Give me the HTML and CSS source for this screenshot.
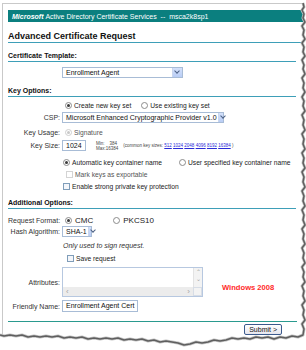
FILE: index.html
```html
<!DOCTYPE html>
<html lang="en">

<head>
  <meta charset="UTF-8" />
  <title>Advanced Certificate Request</title>
  <link rel="stylesheet" href="styles.css">
</head>

<body>
  <div class="shot">
    <div class="page">
      <div class="banner"><b>Microsoft</b>&nbsp;Active Directory Certificate Services &nbsp;--&nbsp; msca2k8sp1</div>

      <div class="title">Advanced Certificate Request</div>

      <div class="sec">Certificate Template:</div>
      <div class="row r-sel">
        <span class="lbl"></span>
        <div class="select w-tpl"><span class="val">Enrollment Agent</span><span class="arrow"></span></div>
      </div>

      <div class="sec">Key Options:</div>
      <div class="row r-10 mt3">
        <span class="lbl"></span>
        <span class="opt ml3"><span class="radio on"></span>Create new key set</span>
        <span class="opt ml10"><span class="radio"></span>Use existing key set</span>
      </div>
      <div class="row r-sel mt2">
        <span class="lbl">CSP:</span>
        <div class="select w-csp"><span class="val">Microsoft Enhanced Cryptographic Provider v1.0</span><span class="arrow"></span></div>
      </div>
      <div class="row r-10 mt4">
        <span class="lbl">Key Usage:</span>
        <span class="opt ml3 muted"><span class="radio on off"></span>Signature</span>
      </div>
      <div class="row r-13 mt2">
        <span class="lbl">Key Size:</span>
        <div class="input w-size">1024</div>
        <div class="minmax">
          <span>Min:&nbsp;&nbsp;&nbsp;&nbsp;384</span>
          <span>Max:16384</span>
        </div>
        <div class="common">(common key sizes: <a href="#">512</a> <a href="#">1024</a> <a href="#">2048</a> <a href="#">4096</a> <a href="#">8192</a> <a href="#">16384</a> )</div>
      </div>
      <div class="row r-10 mt5">
        <span class="lbl"></span>
        <span class="opt ml1"><span class="radio on"></span>Automatic key container name</span>
        <span class="opt ml17"><span class="radio"></span>User specified key container name</span>
      </div>
      <div class="row r-10 mt2">
        <span class="lbl"></span>
        <span class="opt ml4 muted"><span class="check off"></span>Mark keys as exportable</span>
      </div>
      <div class="row r-10 mt2">
        <span class="lbl"></span>
        <span class="opt ml1"><span class="check"></span>Enable strong private key protection</span>
      </div>

      <div class="sec sec-add">Additional Options:</div>
      <div class="row r-12 mt5">
        <span class="lbl">Request Format:</span>
        <span class="opt big ml3"><span class="radio on"></span>CMC</span>
        <span class="opt big ml20"><span class="radio"></span>PKCS10</span>
      </div>
      <div class="row r-sel">
        <span class="lbl">Hash Algorithm:</span>
        <div class="select w-hash"><span class="val">SHA-1</span><span class="arrow"></span></div>
      </div>
      <div class="row r-10 mt3">
        <span class="lbl"></span>
        <span class="note">Only used to sign request.</span>
      </div>
      <div class="row r-10 mt3">
        <span class="lbl"></span>
        <span class="opt ml5"><span class="check"></span>Save request</span>
      </div>
      <div class="row r-attr mt4">
        <span class="lbl">Attributes:</span>
        <div class="textarea">
          <div class="ta-body"></div>
          <div class="ta-vbar"><span>&#8963;</span><span>&#8964;</span></div>
          <div class="ta-hbar"><span>&lsaquo;</span><span>&rsaquo;</span></div>
          <div class="ta-corner"></div>
        </div>
        <span class="stamp">Windows 2008</span>
      </div>
      <div class="row r-12 mt3">
        <span class="lbl">Friendly Name:</span>
        <div class="input w-name">Enrollment Agent Cert</div>
      </div>

      <div class="divider"></div>
      <div class="row r-btn mt2">
        <button class="submit" type="button">Submit &gt;</button>
      </div>
    </div>

    <svg class="torn" width="306" height="350" viewBox="0 0 306 350">
      <path class="cover" d="M306,0 L303,3 304,7 302,10 304,14 303,18 305,22 302,26 304,30 303,35 305,39 302,43 304,47 303,52 305,56 302,60 304,65 303,69 305,74 302,78 304,83 303,88 305,92 302,97 304,101 303,106 305,111 302,115 304,120 303,125 305,130 302,134 304,139 303,144 305,149 302,153 304,158 303,163 305,168 302,172 304,177 303,182 305,187 302,191 304,196 303,201 305,206 302,210 304,215 303,220 305,225 302,229 304,234 303,239 305,244 302,248 304,253 303,258 305,263 302,267 304,272 303,277 305,282 302,286 304,291 303,296 305,301 302,305 304,310 303,315 305,320 302,324 304,329 303,335 298,337 292,336 286,338 280,337 274,339 268,337 262,338 256,337 250,339 244,338 238,339 232,338 226,340 220,341 214,340 208,342 202,343 196,342 190,344 184,345 178,343 172,342 166,341 160,342 154,340 148,341 142,339 136,340 130,339 124,340 118,338 112,339 106,338 100,339 94,338 88,339 82,337 76,338 70,337 64,338 58,336 52,337 46,336 40,337 34,336 28,337 22,335 16,336 10,335 4,336 0,335 L0,350 L306,350 Z" />
      <polyline class="shade" points="303,3 304,7 302,10 304,14 303,18 305,22 302,26 304,30 303,35 305,39 302,43 304,47 303,52 305,56 302,60 304,65 303,69 305,74 302,78 304,83 303,88 305,92 302,97 304,101 303,106 305,111 302,115 304,120 303,125 305,130 302,134 304,139 303,144 305,149 302,153 304,158 303,163 305,168 302,172 304,177 303,182 305,187 302,191 304,196 303,201 305,206 302,210 304,215 303,220 305,225 302,229 304,234 303,239 305,244 302,248 304,253 303,258 305,263 302,267 304,272 303,277 305,282 302,286 304,291 303,296 305,301 302,305 304,310 303,315 305,320 302,324 304,329 303,335 298,337 292,336 286,338 280,337 274,339 268,337 262,338 256,337 250,339 244,338 238,339 232,338 226,340 220,341 214,340 208,342 202,343 196,342 190,344 184,345 178,343 172,342 166,341 160,342 154,340 148,341 142,339 136,340 130,339 124,340 118,338 112,339 106,338 100,339 94,338 88,339 82,337 76,338 70,337 64,338 58,336 52,337 46,336 40,337 34,336 28,337 22,335 16,336 10,335 4,336 0,335" />
      <polyline class="edge" points="303,3 304,7 302,10 304,14 303,18 305,22 302,26 304,30 303,35 305,39 302,43 304,47 303,52 305,56 302,60 304,65 303,69 305,74 302,78 304,83 303,88 305,92 302,97 304,101 303,106 305,111 302,115 304,120 303,125 305,130 302,134 304,139 303,144 305,149 302,153 304,158 303,163 305,168 302,172 304,177 303,182 305,187 302,191 304,196 303,201 305,206 302,210 304,215 303,220 305,225 302,229 304,234 303,239 305,244 302,248 304,253 303,258 305,263 302,267 304,272 303,277 305,282 302,286 304,291 303,296 305,301 302,305 304,310 303,315 305,320 302,324 304,329 303,335 298,337 292,336 286,338 280,337 274,339 268,337 262,338 256,337 250,339 244,338 238,339 232,338 226,340 220,341 214,340 208,342 202,343 196,342 190,344 184,345 178,343 172,342 166,341 160,342 154,340 148,341 142,339 136,340 130,339 124,340 118,338 112,339 106,338 100,339 94,338 88,339 82,337 76,338 70,337 64,338 58,336 52,337 46,336 40,337 34,336 28,337 22,335 16,336 10,335 4,336 0,335" />
    </svg>
  </div>
</body>

</html>
```

FILE: styles.css
```css
body {
  margin: 0;
  background: #fff;
  font-family: "Liberation Sans", Arial, sans-serif;
  font-size: 7px;
  color: #222;
}

.shot {
  position: relative;
  width: 306px;
  height: 350px;
  overflow: hidden;
}

.page {
  margin: 3px 0 0 2px;
  width: 302px;
  height: 333px;
  padding-left: 5px;
  box-sizing: border-box;
  border-top: 1px solid #c9c9c9;
  border-left: 1px solid #c9c9c9;
}

.banner {
  margin-top: 6px;
  height: 12px;
  padding-left: 4px;
  display: flex;
  align-items: center;
  background: #0b7f7f;
  color: #fff;
  white-space: nowrap;
}

.banner b {
  font-style: italic;
}

.title {
  margin: 8px 1px 0 0;
  height: 12px;
  line-height: 12px;
  font-size: 9px;
  font-weight: bold;
  color: #111;
  border-bottom: 1px solid #3e9fb8;
}

.sec {
  margin: 8px 8px 0 0;
  height: 10px;
  line-height: 10px;
  font-weight: bold;
  color: #111;
  border-bottom: 1px solid #3e9fb8;
}

.sec-add {
  margin-top: 7px;
}

.row {
  display: flex;
  align-items: center;
  white-space: nowrap;
}

.r-sel { height: 11px; margin-top: 5px; }
.r-10 { height: 10px; }
.r-12 { height: 12px; }
.r-13 { height: 13px; }
.r-attr { height: 30px; align-items: stretch; }
.r-btn { height: 11px; justify-content: flex-end; padding-right: 22px; }

.r-sel.mt2 { margin-top: 2px; }
.r-12 + .r-sel { margin-top: 0; }

.mt2 { margin-top: 2px; }
.mt3 { margin-top: 3px; }
.mt4 { margin-top: 4px; }
.mt5 { margin-top: 5px; }

.ml1 { margin-left: 1px; }
.ml3 { margin-left: 3px; }
.ml4 { margin-left: 4px; }
.ml5 { margin-left: 5px; }
.ml10 { margin-left: 10px; }
.ml17 { margin-left: 17px; }
.ml20 { margin-left: 20px; }

.lbl {
  width: 52px;
  margin-right: 2px;
  text-align: right;
  color: #333;
  flex-shrink: 0;
}

.r-attr .lbl {
  align-self: center;
}

.opt {
  display: flex;
  align-items: center;
  gap: 2px;
  font-size: 6.7px;
  color: #222;
}

.opt.big {
  font-size: 8px;
  gap: 3px;
}

.muted {
  color: #555;
}

.radio {
  position: relative;
  width: 5px;
  height: 5px;
  border: 1px solid #8c8c8c;
  border-radius: 50%;
  background: #fff;
}

.radio.on::after {
  content: "";
  position: absolute;
  left: 1px;
  top: 1px;
  width: 3px;
  height: 3px;
  border-radius: 50%;
  background: #3a3a3a;
}

.radio.off {
  border-color: #cfcfcf;
}

.radio.off::after {
  background: #c8c8c8;
}

.check {
  width: 5px;
  height: 5px;
  border: 1px solid #7f9db9;
  background: #f4f6fa;
}

.check.off {
  border-color: #d4d4d4;
  background: #fff;
}

.select {
  display: flex;
  height: 11px;
  box-sizing: border-box;
  border: 1px solid #a8bcd6;
  background: #fff;
}

.select .val {
  flex: 1;
  padding-left: 3px;
  line-height: 9px;
  color: #111;
}

.select .arrow {
  position: relative;
  width: 9px;
  margin: 0 0 0 1px;
  background: linear-gradient(#d4e1fb, #b9cdf5);
  border-left: 1px solid #c9d6ee;
}

.select .arrow::after {
  content: "";
  position: absolute;
  left: 2px;
  top: 1px;
  width: 3px;
  height: 3px;
  border-right: 1.5px solid #4d6185;
  border-bottom: 1.5px solid #4d6185;
  transform: rotate(45deg);
}

.w-tpl { width: 121px; }
.w-csp { width: 162px; }
.w-hash { width: 30px; }

.input {
  height: 11px;
  box-sizing: border-box;
  padding-left: 3px;
  line-height: 9px;
  border: 1px solid #a8bcd6;
  color: #111;
}

.r-12 .input { height: 12px; line-height: 10px; }

.w-size { width: 24px; }
.w-name { width: 76px; }

.minmax {
  display: flex;
  flex-direction: column;
  margin-left: 10px;
  font-size: 4.5px;
  line-height: 5px;
  color: #444;
}

.common {
  margin-left: 5px;
  font-size: 4.5px;
  color: #444;
}

.common a {
  color: #2a2ad8;
}

.note {
  font-style: italic;
  color: #333;
  margin-left: 1px;
}

.textarea {
  position: relative;
  width: 141px;
  box-sizing: border-box;
  border: 1px solid #b7c8e0;
  display: grid;
  grid-template-columns: 1fr 9px;
  grid-template-rows: 1fr 9px;
}

.ta-vbar {
  display: flex;
  flex-direction: column;
  align-items: center;
  padding-top: 1px;
  background: #f3f3f3;
  border-left: 1px solid #e3e3e3;
  color: #a5a5a5;
  font-size: 6px;
  line-height: 7px;
}

.ta-hbar {
  display: flex;
  justify-content: space-between;
  align-items: center;
  padding: 0 3px;
  background: #ececec;
  color: #a5a5a5;
  font-size: 8px;
  line-height: 8px;
}

.ta-corner {
  background: #f3f3f3;
  border: 1px solid #d7dde6;
}

.stamp {
  align-self: center;
  margin: 10px 0 0 19px;
  font-size: 7.6px;
  font-weight: bold;
  color: #ff2a2a;
}

.divider {
  margin: 9px 7px 0 0;
  border-bottom: 1px solid #2a9a8f;
}

.submit {
  height: 11px;
  padding: 0 4px;
  box-sizing: border-box;
  font-family: "Liberation Sans", Arial, sans-serif;
  font-size: 7px;
  line-height: 8px;
  color: #111;
  border: 1px solid #3b5a8c;
  border-radius: 2px;
  background: linear-gradient(#ffffff, #e6e6ee);
}

.torn {
  position: absolute;
  left: 0;
  top: 0;
}

.torn .cover {
  fill: #fff;
}

.torn .shade {
  fill: none;
  stroke: #c4c4c4;
  stroke-width: 3;
  stroke-linejoin: round;
}

.torn .edge {
  fill: none;
  stroke: #5f5f5f;
  stroke-width: 1.5;
  stroke-linejoin: round;
}
```
